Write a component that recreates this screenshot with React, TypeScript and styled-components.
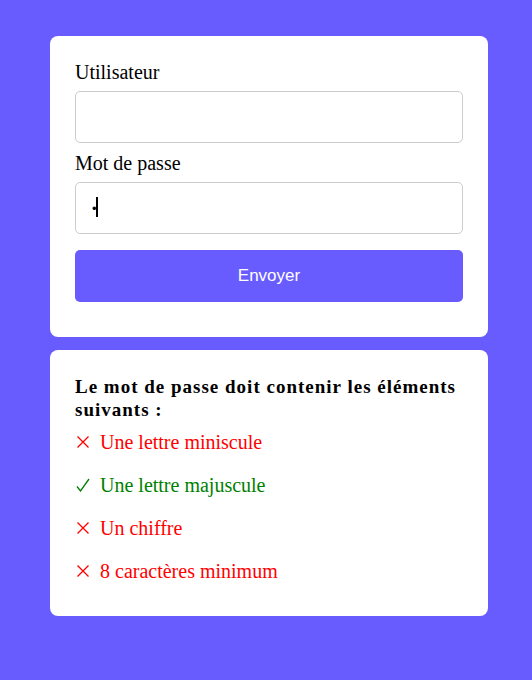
import styled, { createGlobalStyle } from 'styled-components';

const GlobalStyle = createGlobalStyle`
  html, body {
    margin: 0;
    padding: 0;
    background: #695cff;
    font-family: "Liberation Serif", "Times New Roman", serif;
  }
`;

type Rule = { label: string; ok: boolean };

const rules: Rule[] = [
  { label: 'Une lettre miniscule', ok: false },
  { label: 'Une lettre majuscule', ok: true },
  { label: 'Un chiffre', ok: false },
  { label: '8 caractères minimum', ok: false },
];

const Cross = () => (
  <svg width="14" height="14" viewBox="0 0 14 14">
    <path d="M1.5 1.5 L12.5 12.5 M12.5 1.5 L1.5 12.5" stroke="currentColor" strokeWidth="1.3" fill="none" />
  </svg>
);

const Check = () => (
  <svg width="14" height="14" viewBox="0 0 14 14">
    <path d="M1 8.5 L4.5 13 L13 1" stroke="currentColor" strokeWidth="1.3" fill="none" />
  </svg>
);

export default function App() {
  return (
    <>
      <GlobalStyle />
      <Page>
        <Card as="form" onSubmit={(e: React.FormEvent) => e.preventDefault()}>
          <Label htmlFor="user">Utilisateur</Label>
          <Input id="user" type="text" />
          <Label htmlFor="pass">Mot de passe</Label>
          <Field>
            <Input id="pass" type="password" defaultValue="a" />
            <Caret />
          </Field>
          <Button type="submit">Envoyer</Button>
        </Card>
        <Card $bottom={34}>
          <Heading>Le mot de passe doit contenir les éléments suivants :</Heading>
          <List>
            {rules.map((r) => (
              <Item key={r.label} $ok={r.ok}>
                <Mark>{r.ok ? <Check /> : <Cross />}</Mark>
                {r.label}
              </Item>
            ))}
          </List>
        </Card>
      </Page>
    </>
  );
}

const Page = styled.div`
  min-height: 680px;
  box-sizing: border-box;
  padding: 36px 44px 0 50px;
  display: flex;
  flex-direction: column;
  gap: 13px;
`;

const Card = styled.div<{ $bottom?: number }>`
  background: #fff;
  border-radius: 8px;
  padding: 25px 25px ${(p) => p.$bottom ?? 35}px;
  display: flex;
  flex-direction: column;
`;

const Label = styled.label`
  font-size: 20px;
  line-height: 22px;
  color: #000;
  margin-bottom: 8px;
`;

const Field = styled.div`
  position: relative;
  display: flex;
  flex-direction: column;
`;

const Input = styled.input`
  height: 52px;
  box-sizing: border-box;
  border: 1px solid #ccc;
  border-radius: 5px;
  padding: 0 16px;
  font-size: 13px;
  margin-bottom: 9px;
  outline: none;
`;

const Caret = styled.span`
  position: absolute;
  left: 21px;
  top: 15px;
  width: 2px;
  height: 20px;
  background: #000;
`;

const Button = styled.button`
  margin-top: 7px;
  height: 52px;
  border: none;
  border-radius: 5px;
  background: #695cff;
  color: #fff;
  font-family: "Liberation Sans", Arial, sans-serif;
  font-size: 17px;
  cursor: pointer;
`;

const Heading = styled.h3`
  margin: 0 0 10px;
  font-size: 19px;
  line-height: 23px;
  letter-spacing: 1px;
  font-weight: bold;
`;

const List = styled.ul`
  list-style: none;
  margin: 0;
  padding: 0;
  display: flex;
  flex-direction: column;
  gap: 21px;
`;

const Item = styled.li<{ $ok: boolean }>`
  font-size: 20px;
  line-height: 22px;
  color: ${(p) => (p.$ok ? 'green' : 'red')};
  display: flex;
  align-items: center;
`;

const Mark = styled.span`
  width: 25px;
  display: flex;
  align-items: center;
  padding-left: 1px;
  box-sizing: border-box;
`;
